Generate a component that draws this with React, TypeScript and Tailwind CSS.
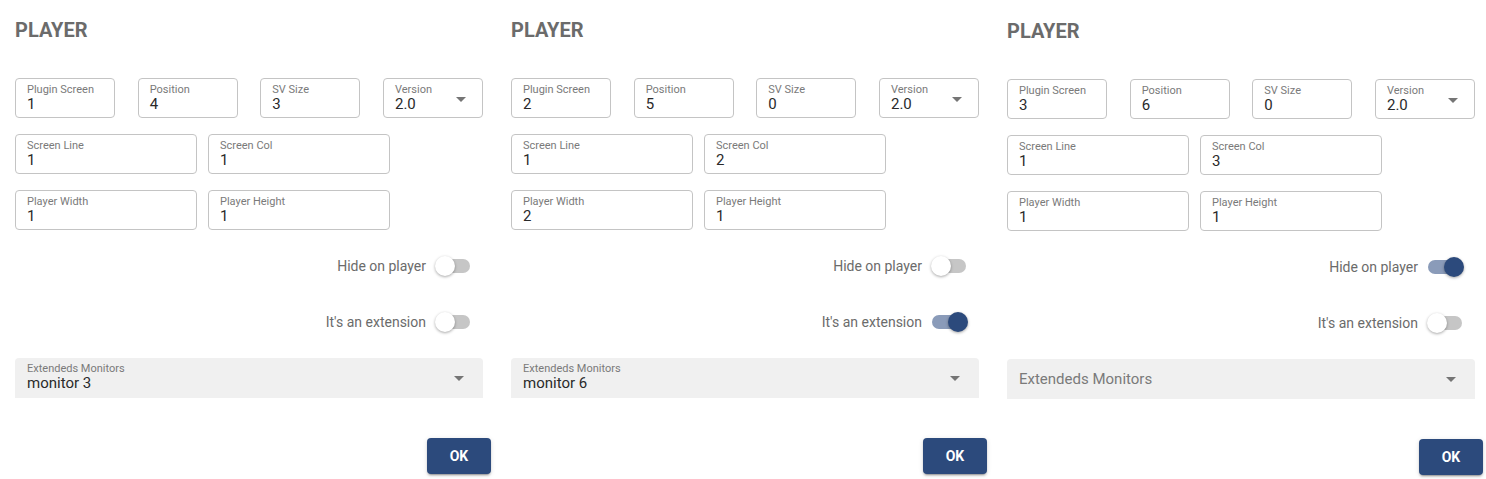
import React from "react";

type Field = { label: string; value: string; wide?: boolean; select?: boolean };

type PanelData = {
  top: number[];
  line: string;
  col: string;
  width: string;
  height: string;
  hide: boolean;
  extension: boolean;
  monitor?: string;
  shift?: boolean;
};

const panels: PanelData[] = [
  { top: [1, 4, 3], line: "1", col: "1", width: "1", height: "1", hide: false, extension: false, monitor: "monitor 3" },
  { top: [2, 5, 0], line: "1", col: "2", width: "2", height: "1", hide: false, extension: true, monitor: "monitor 6" },
  { top: [3, 6, 0], line: "1", col: "3", width: "1", height: "1", hide: true, extension: false, shift: true },
];

function Arrow({ className }: { className: string }) {
  return (
    <svg viewBox="0 0 24 24" className={className} fill="#757575">
      <path d="M7 10l5 5 5-5z" />
    </svg>
  );
}

function Input({ label, value, wide, select }: Field) {
  return (
    <div
      className={`relative h-10 rounded-[4px] border border-[#c4c4c4] pl-[11px] pt-[5px] ${
        wide ? "w-[182px]" : "w-[100px]"
      }`}
    >
      <div className="text-[11px] leading-[12px] text-[#7a7a7a]">{label}</div>
      <div className="text-[15px] leading-[16px] text-[#2a2a2a]">{value}</div>
      {select && <Arrow className="absolute right-[9px] top-[8px] h-6 w-6" />}
    </div>
  );
}

function Toggle({ label, on }: { label: string; on: boolean }) {
  return (
    <div className="flex h-[38px] items-center justify-end gap-[9px] pr-[11px]">
      <span className="text-[14px] text-[#6b6b6b]">{label}</span>
      <div className="relative h-5 w-[37px]">
        <div
          className={`absolute left-[1px] top-[3px] h-[14px] w-[34px] rounded-full ${
            on ? "bg-[#8a9bb9]" : "bg-[#c6c6c6]"
          }`}
        />
        <div
          className={`absolute top-0 h-5 w-5 rounded-full shadow-[0_1px_3px_rgba(0,0,0,0.35)] ${
            on ? "left-[17px] bg-[#2c4a7c]" : "left-0 bg-white"
          }`}
        />
      </div>
    </div>
  );
}

function Panel({ p }: { p: PanelData }) {
  return (
    <div className={`w-[496px] shrink-0 pl-[15px] pr-[5px] ${p.shift ? "pt-[19px]" : "pt-[18px]"}`}>
      <div className="text-[20px] font-bold leading-6 text-[#6b6b6b]">PLAYER</div>
      <div className="w-[468px]">
        <div className="mt-[36px] flex justify-between">
          <Input label="Plugin Screen" value={String(p.top[0])} />
          <Input label="Position" value={String(p.top[1])} />
          <Input label="SV Size" value={String(p.top[2])} />
          <Input label="Version" value="2.0" select />
        </div>
        <div className="mt-4 flex gap-[11px]">
          <Input label="Screen Line" value={p.line} wide />
          <Input label="Screen Col" value={p.col} wide />
        </div>
        <div className="mt-4 flex gap-[11px]">
          <Input label="Player Width" value={p.width} wide />
          <Input label="Player Height" value={p.height} wide />
        </div>
        <div className="mt-[17px]">
          <Toggle label="Hide on player" on={p.hide} />
        </div>
        <div className="mt-[18px]">
          <Toggle label="It's an extension" on={p.extension} />
        </div>
        <div className="relative mt-[17px] h-10 rounded-t-[4px] bg-[#f0f0f0] pl-3">
          {p.monitor ? (
            <div className="pt-[5px]">
              <div className="text-[11px] leading-[12px] text-[#7a7a7a]">Extendeds Monitors</div>
              <div className="text-[15px] leading-[16px] text-[#2a2a2a]">{p.monitor}</div>
            </div>
          ) : (
            <div className="flex h-10 items-center text-[15px] text-[#7a7a7a]">Extendeds Monitors</div>
          )}
          <Arrow className="absolute right-[12px] top-[8px] h-6 w-6" />
        </div>
      </div>
      <div className="mt-[40px] flex justify-end">
        <button className="h-9 w-16 rounded-[4px] bg-[#2c4a7c] text-[14px] font-bold text-white shadow-[0_3px_1px_-2px_rgba(0,0,0,0.2),0_2px_2px_0_rgba(0,0,0,0.14),0_1px_5px_0_rgba(0,0,0,0.12)]">
          OK
        </button>
      </div>
    </div>
  );
}

export default function App() {
  return (
    <div className="flex h-[479px] w-[1486px] overflow-hidden bg-white font-['Roboto',sans-serif]">
      {panels.map((p, i) => (
        <Panel key={i} p={p} />
      ))}
    </div>
  );
}
